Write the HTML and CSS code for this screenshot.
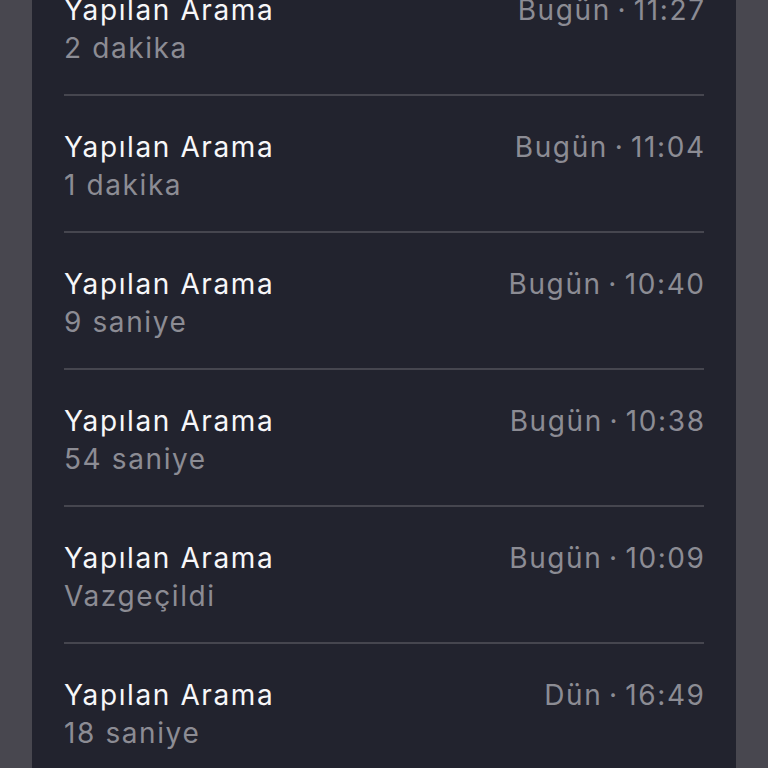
FILE: index.html
```html
<!DOCTYPE html>
<html lang="tr">
<head>
<meta charset="utf-8">
<link rel="stylesheet" href="styles.css">
</head>
<body>
<div class="card">
  <ul class="list">
    <li class="row"><div class="info"><div class="title">Yapılan Arama</div><div class="sub">2 dakika</div></div><div class="time">Bugün&thinsp;·&thinsp;11:27</div></li>
    <li class="row"><div class="info"><div class="title">Yapılan Arama</div><div class="sub">1 dakika</div></div><div class="time">Bugün&thinsp;·&thinsp;11:04</div></li>
    <li class="row"><div class="info"><div class="title">Yapılan Arama</div><div class="sub">9 saniye</div></div><div class="time">Bugün&thinsp;·&thinsp;10:40</div></li>
    <li class="row"><div class="info"><div class="title">Yapılan Arama</div><div class="sub">54 saniye</div></div><div class="time">Bugün&thinsp;·&thinsp;10:38</div></li>
    <li class="row"><div class="info"><div class="title">Yapılan Arama</div><div class="sub">Vazgeçildi</div></div><div class="time">Bugün&thinsp;·&thinsp;10:09</div></li>
    <li class="row"><div class="info"><div class="title">Yapılan Arama</div><div class="sub">18 saniye</div></div><div class="time">Dün&thinsp;·&thinsp;16:49</div></li>
  </ul>
</div>
</body>
</html>
```
FILE: styles.css
```css
html, body {
  margin: 0;
  padding: 0;
  height: 768px;
  overflow: hidden;
  background: #48474f;
}
body {
  font-family: Inter, "Noto Sans", sans-serif;
  -webkit-font-smoothing: antialiased;
}
.card {
  margin: 0 32px;
  height: 768px;
  background: #22232e;
  padding: 0 32px;
  overflow: hidden;
}
.list {
  list-style: none;
  margin: -41px 0 0 0;
  padding: 0;
}
.row {
  display: flex;
  justify-content: space-between;
  align-items: flex-start;
  height: 135px;
  box-sizing: content-box;
  padding: 0;
  border-bottom: 2px solid #46464f;
}
.info {
  padding-top: 32px;
}
.title,
.sub,
.time {
  font-size: 28px;
  line-height: 38px;
  letter-spacing: 1.6px;
}
.title {
  color: #f7f7f9;
}
.sub {
  color: #8c8c94;
}
.time {
  padding-top: 32px;
  margin-right: -1.6px;
  color: #8c8c94;
}
```
